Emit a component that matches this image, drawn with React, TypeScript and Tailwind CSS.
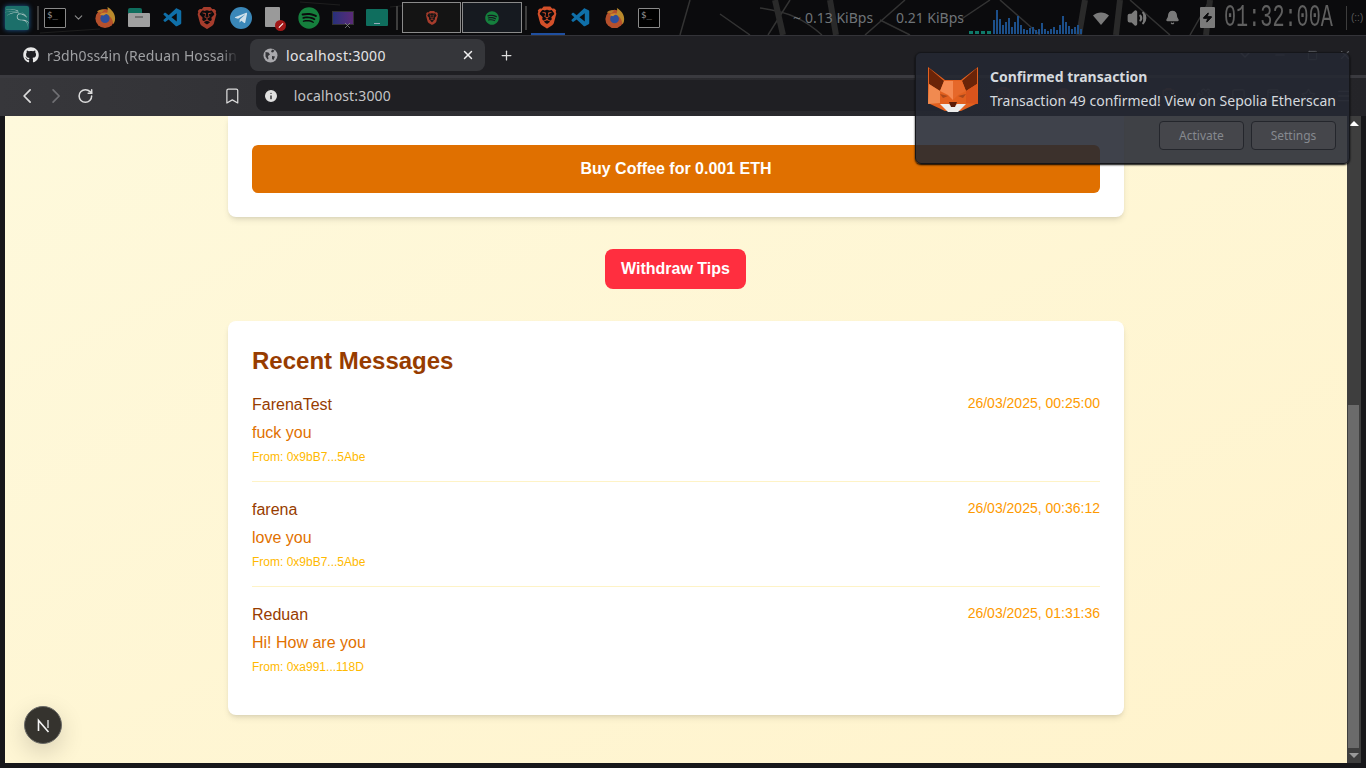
import { ChevronDown, ChevronLeft, ChevronRight, RotateCw, Bookmark, Plus, X, Info, Minus, Square, Volume2, Bell, Zap, Share2, Menu, Puzzle, Star, Wallet } from 'lucide-react';
import { FaGithub, FaSpotify, FaTelegramPlane } from 'react-icons/fa';
import { SiBrave, SiKalilinux } from 'react-icons/si';
import { VscVscode } from 'react-icons/vsc';

const messages = [
  { name: 'FarenaTest', date: '26/03/2025, 00:25:00', text: 'fuck you', from: '0x9bB7...5Abe' },
  { name: 'farena', date: '26/03/2025, 00:36:12', text: 'love you', from: '0x9bB7...5Abe' },
  { name: 'Reduan', date: '26/03/2025, 01:31:36', text: 'Hi! How are you', from: '0xa991...118D' },
];

const barHeights = [14, 24, 15, 9, 12, 16, 7, 12, 18, 9, 5, 4, 6, 7, 4, 5, 11, 5, 3, 5, 7, 4, 9, 18, 12, 8, 5, 7, 9, 5];

const Firefox = ({ size = 22 }: { size?: number }) => (
  <svg width={size} height={size} viewBox="0 0 24 24">
    <circle cx="11.5" cy="13" r="10" fill="#b5502c" />
    <path d="M14 1c5 3 8 7 8 12 0 3-1 5-2 6 0-5-3-9-7-10 1-2 2-5 1-8z" fill="#b98a2c" />
    <path d="M3 6c2-2 5-3 8-2l-3 3z" fill="#b97a2c" />
    <circle cx="11.5" cy="13" r="4.8" fill="#2e4f9c" />
    <path d="M6 9c2-2 6-3 9-1-2 0-4 1-5 2z" fill="#c98a30" />
  </svg>
);

const Terminal = ({ w = 22, h = 20 }: { w?: number; h?: number }) => (
  <div className="flex shrink-0 items-start rounded-[1px] border border-[#8a8a8a] bg-black pl-[2px] text-[9px] leading-[12px] text-[#9a9a9a] [font-family:'DejaVu_Sans_Mono',monospace]" style={{ width: w, height: h }}>
    $_
  </div>
);

const TopPanel = () => (
  <div className="relative flex h-[35px] shrink-0 items-center overflow-hidden bg-[#0b0b0d]">
    {/* wallpaper branches */}
    <svg className="absolute inset-0" width="1366" height="35" fill="none" stroke="#333">
      <path d="M760 8c30 4 45 12 62 27M790 0l-22 35M905 0l-40 35M880 20l30 15M720 14l30 21M1000 0l40 35M960 20l30-20M1130 0l40 35M1190 35l20-35M690 0l-10 35" strokeWidth="1.5" />
      <path d="M775 0l8 35M830 0l6 35M1085 0l-6 35M1120 0l-4 35M1210 0l-4 35" strokeWidth="6" stroke="#2a2a2a" />
      <path d="M40 33l60-4M300 2l40 3M420 4l-30 3" stroke="#1e1e1e" />
    </svg>

    <div className="relative flex items-center pl-[5px]">
      <div className="flex h-[24px] w-[24px] items-center justify-center rounded-[2px] bg-[#1c6f6a] shadow-[0_0_5px_#1d5f9a]">
        <SiKalilinux size={24} color="#b9cecc" />
      </div>
      <div className="ml-[8px] h-[24px] w-[2px] bg-[#3d3d3d]" />
      <div className="ml-[5px]"><Terminal /></div>
      <ChevronDown size={13} color="#8c8c8c" className="ml-[6px]" />
      <div className="ml-[9px]"><Firefox size={23} /></div>
      <div className="ml-[11px] flex w-[23px] flex-col">
        <div className="h-[5px] w-[14px] rounded-t-[2px] bg-[#0f6e5e]" />
        <div className="flex h-[14px] w-[22px] justify-center rounded-[1px] bg-[#a0a0a0]">
          <div className="mt-[3px] h-[2px] w-[8px] bg-[#707070]" />
        </div>
      </div>
      <div className="ml-[11px] flex w-[22px] justify-center"><VscVscode size={22} color="#0f6fa8" /></div>
      <div className="ml-[12px] flex w-[22px] justify-center"><SiBrave size={22} color="#a63c2c" /></div>
      <div className="ml-[12px] flex h-[22px] w-[22px] items-center justify-center rounded-full bg-[#3a87b8]">
        <FaTelegramPlane size={14} color="#cfe0ea" />
      </div>
      <div className="relative ml-[12px] h-[22px] w-[22px]">
        <div className="ml-[1px] h-[20px] w-[15px] rounded-[1px] bg-[#9a9a9a]" />
        <div className="absolute bottom-[-2px] right-0 flex h-[11px] w-[11px] items-center justify-center rounded-full bg-[#a01818]">
          <div className="h-[1px] w-[6px] -rotate-45 bg-white" />
        </div>
      </div>
      <div className="ml-[12px] flex w-[22px] justify-center"><FaSpotify size={22} color="#15803d" /></div>
      <div className="relative ml-[12px] h-[14px] w-[22px] border border-[#333] bg-gradient-to-r from-[#27307a] to-[#5a2a78]">
        <X size={9} color="#8a8a8a" strokeWidth={2} className="absolute -bottom-[6px] right-[1px]" />
      </div>
      <div className="ml-[12px] flex h-[17px] w-[22px] items-end justify-center rounded-[1px] bg-[#0f6e5e] pb-[2px]">
        <div className="h-[1px] w-[6px] bg-[#9ab]" />
      </div>
      <div className="ml-[8px] h-[24px] w-[2px] bg-[#3d3d3d]" />
      <div className="ml-[4px] flex h-[31px] w-[59px] items-center justify-center border border-[#8a8a8a] bg-[#141414]">
        <SiBrave size={14} color="#a63c2c" />
      </div>
      <div className="ml-[1px] flex h-[31px] w-[60px] items-center justify-center border border-[#8a8a8a] bg-[#161a20]">
        <FaSpotify size={14} color="#15803d" />
      </div>
      <div className="ml-[3px] h-[24px] w-[2px] bg-[#3d3d3d]" />
      <div className="relative ml-[9px] flex h-[35px] w-[22px] items-center justify-center">
        <SiBrave size={23} color="#d4502a" />
        <div className="absolute bottom-0 left-[-5px] h-[2px] w-[34px] bg-[#1f4fa0]" />
      </div>
      <div className="ml-[12px] flex w-[22px] justify-center"><VscVscode size={22} color="#0f6fa8" /></div>
      <div className="ml-[12px]"><Firefox size={22} /></div>
      <div className="ml-[12px]"><Terminal /></div>
    </div>

    <div className="relative ml-[133px] flex w-[171px] shrink-0 items-center whitespace-nowrap text-[14px] text-[#6f7478] [font-family:'Noto_Sans',sans-serif]">
      <span className="w-[12px]">~</span>
      <span className="w-[91px]">0.13 KiBps</span>
      <span>0.21 KiBps</span>
    </div>

    <div className="relative ml-[5px] flex h-[35px] shrink-0 items-end pb-[1px]">
      {[0, 1, 2, 3].map((i) => (
        <div key={i} className="mr-[2px] h-[3px] w-[4px] bg-[#0f7a6a]" />
      ))}
      {barHeights.map((h, i) => (
        <div key={i} className="mr-[1px] w-[2px] bg-[#1c4f8a]" style={{ height: h }} />
      ))}
    </div>

    <div className="relative flex flex-1 items-center text-[#7a7a7a]">
      <svg width="16" height="14" viewBox="0 0 16 14" className="ml-[10px]">
        <path d="M0 4.5C4.5.5 11.5.5 16 4.5L8 14z" fill="#7a7a7a" />
      </svg>
      <Volume2 size={20} strokeWidth={2.5} fill="#7a7a7a" className="ml-[18px]" />
      <Bell size={15} fill="#7a7a7a" className="ml-[18px]" />
      <div className="ml-[20px] flex h-[21px] w-[15px] items-center justify-center rounded-[1px] bg-[#7a7a7a]">
        <Zap size={11} fill="#0b0b0d" color="#0b0b0d" />
      </div>
      <span className="ml-[9px] w-[108px] origin-left scale-x-[0.63] whitespace-nowrap text-[32px] leading-[35px] text-[#5f5f5f] [font-family:'Liberation_Mono',monospace]">01:32:00A</span>
      <div className="ml-[14px] h-[24px] w-[1px] bg-[#3d3d3d]" />
      <span className="ml-[4px] whitespace-nowrap text-[10px] text-[#5a5a5a] [font-family:'Liberation_Sans',sans-serif]">(::)</span>
    </div>
  </div>
);

const TabStrip = () => (
  <div className="flex h-[39px] shrink-0 items-center bg-[#1f1f23] pb-[4px] pl-[23px] pt-[3px] text-[14px] [font-family:'Noto_Sans',sans-serif]">
    <FaGithub size={16} color="#e8e8e8" />
    <span className="ml-[8px] w-[192px] overflow-hidden whitespace-nowrap tracking-[0.12px] text-[#9fa0a3] [mask-image:linear-gradient(to_right,black_90%,transparent)]">r3dh0ss4in (Reduan Hossain</span>
    <div className="ml-[11px] flex h-[32px] w-[235px] items-center rounded-lg bg-[#35363a] pl-[13px] pr-[10px] tracking-[0.35px] text-[#e4e4e6]">
      <svg width="15" height="15" viewBox="0 0 15 15">
        <circle cx="7.5" cy="7.5" r="7" fill="#a9a9ad" />
        <path d="M2.5 4l3 .5 1.5 2-2 1.5.5 3-1 .5-2-3zM9 1.5l2.5 1-1.500 2-2-.5zM9 8l3 .500-1.500 3.500-1.500-1z" fill="#35363a" />
      </svg>
      <span className="ml-[8px] flex-1">localhost:3000</span>
      <X size={14} color="#f0f0f0" strokeWidth={2.5} />
    </div>
    <Plus size={15} color="#dcdcdc" className="ml-[14px]" />
    <div className="ml-auto flex items-center gap-[20px] pr-[14px] text-[#5c5e63]">
      <ChevronDown size={16} />
      <Minus size={14} />
      <Square size={11} />
      <X size={14} />
    </div>
  </div>
);

const Toolbar = () => (
  <div className="flex h-[41px] shrink-0 items-center border-t-[3px] border-[#3a3a3f] bg-gradient-to-r from-[#37373b] via-[#2a2a2e] to-[#242428] pb-[3px] pl-[15px] text-[#dcdcdc] [font-family:'Noto_Sans',sans-serif]">
    <ChevronLeft size={26} strokeWidth={1.7} />
    <ChevronRight size={26} strokeWidth={1.7} color="#707074" className="ml-[5px]" />
    <RotateCw size={18} className="ml-[9px]" strokeWidth={2.2} />
    <Bookmark size={20} strokeWidth={1.6} className="ml-[129px]" />
    <div className="ml-[14px] flex h-[31px] w-[750px] items-center rounded-lg bg-[#1f1f23] pl-[7px] text-[14px] tracking-[0.15px] text-[#c4c4c6]">
      <Info size={16} fill="#e0e0e0" color="#1f1f23" />
      <span className="ml-[15px]">localhost:3000</span>
    </div>
    <div className="ml-[5px] flex flex-1 items-center gap-[20px] pr-[14px] text-[#55575c]">
      <Share2 size={15} />
      <SiBrave size={17} color="#6e3b30" />
      <div className="ml-[24px] h-[15px] w-[15px] rounded-full bg-[#6e3b30]" />
      <div className="ml-[70px]"><SiBrave size={15} color="#5a3a34" /></div>
      <Puzzle size={15} />
      <Square size={15} />
      <Wallet size={15} />
      <Star size={15} />
      <Menu size={16} />
    </div>
  </div>
);

const Fox = () => (
  <svg width="50" height="46" viewBox="0 0 50 46">
    <polygon points="0,0 17,13 33,13 50,0 50,36 33,44 17,44 0,36" fill="#e2601f" />
    <polygon points="1,1 16,14 12,24 1,17" fill="#6a2408" />
    <polygon points="49,1 34,14 38,24 49,17" fill="#6a2408" />
    <polygon points="16,14 25,14 25,33 20,28 12,24" fill="#f58a52" />
    <polygon points="25,14 34,14 38,24 30,28 25,33" fill="#e6682a" />
    <polygon points="1,17 12,24 12,36 0,37" fill="#f08a50" />
    <polygon points="49,17 38,24 38,36 50,37" fill="#d9541c" />
    <polygon points="12,27 20,29 15,31" fill="#a8481c" />
    <polygon points="38,27 30,29 35,31" fill="#a8481c" />
    <polygon points="12,37 21,37 25,40 29,37 38,37 30,45 20,45" fill="#ececec" />
    <polygon points="21,35 29,35 27,40 23,40" fill="#5a1c08" />
  </svg>
);

const Notification = () => (
  <div className="absolute left-[915px] top-[52px] h-[112px] w-[435px] rounded-md border border-[#15161a] bg-[#242832]/[0.88] text-[#d5d9de] shadow-[0_1px_2px_#000] [font-family:'Noto_Sans',sans-serif]">
    <div className="flex pl-[12px] pt-[14px]">
      <Fox />
      <div className="ml-[12px]">
        <div className="text-[14px] font-bold leading-[20px]">Confirmed transaction</div>
        <div className="mt-[4px] whitespace-nowrap text-[14px] leading-[20px]">Transaction 49 confirmed! View on Sepolia Etherscan</div>
      </div>
    </div>
    <div className="mt-[8px] flex justify-end gap-[7px] pr-[13px]">
      <button className="h-[29px] w-[85px] rounded border border-[#24262c] bg-[#ffffff08] text-[12px] text-[#85898f]">Activate</button>
      <button className="h-[29px] w-[85px] rounded border border-[#24262c] bg-[#ffffff08] text-[12px] text-[#85898f]">Settings</button>
    </div>
  </div>
);

const Page = () => (
  <div className="relative flex-1 overflow-hidden bg-gradient-to-br from-[#fef9dc] to-[#fff3cc] [font-family:'Liberation_Sans',Arial,sans-serif]">
    <div className="mx-auto flex w-[896px] flex-col items-center">
      <div className="w-full rounded-b-lg bg-white px-6 pb-6 pt-[29px] shadow-md">
        <button className="h-[48px] w-full rounded-md bg-[#e07000] text-[16px] font-bold text-white">Buy Coffee for 0.001 ETH</button>
      </div>
      <button className="mr-[1px] mt-8 h-[40px] w-[141px] rounded-lg bg-[#ff2e3f] text-[16px] font-bold text-white">Withdraw Tips</button>
      <div className="mt-8 w-full rounded-lg bg-white p-6 shadow-md">
        <h2 className="mb-4 text-[24px] font-bold leading-[32px] text-[#973c00]">Recent Messages</h2>
        {messages.map((m, i) => (
          <div key={m.name} className={`pb-4 ${i < messages.length - 1 ? 'mb-4 border-b border-[#fef3c6]' : ''}`}>
            <div className="flex items-start justify-between">
              <span className="text-[16px] leading-[24px] text-[#973c00]">{m.name}</span>
              <span className="text-[14px] leading-[20px] text-[#fe9a00]">{m.date}</span>
            </div>
            <p className="mt-[4px] text-[16px] leading-[24px] text-[#e17100]">{m.text}</p>
            <p className="mt-[4px] text-[12px] leading-[16px] text-[#ffb900]">From: {m.from}</p>
          </div>
        ))}
      </div>
    </div>
    <div className="absolute bottom-[19px] left-[19px] flex h-[38px] w-[38px] items-center justify-center rounded-full border border-[#6a6a66] bg-[#35332e] shadow-[0_8px_24px_rgba(0,0,0,0.16)]">
      <svg width="15" height="15" viewBox="0 0 15 15" fill="none">
        <path d="M2.500 13V2.500L12.500 14" stroke="#f5f5f5" strokeWidth="1.6" />
        <path d="M12 2v8" stroke="#c8c8c8" strokeWidth="1.6" />
      </svg>
    </div>
  </div>
);

const Scrollbar = () => (
  <div className="flex w-[14px] shrink-0 flex-col bg-[#3e3e3e] pl-[1px] pr-[2px]">
    <div className="flex h-[289px] shrink-0 justify-center pt-[5px]">
      <div className="h-0 w-0 border-x-[5px] border-b-[5px] border-x-transparent border-b-white" />
    </div>
    <div className="h-[343px] shrink-0 bg-[#6b6b6b]" />
    <div className="flex flex-1 justify-center pt-[5px]">
      <div className="h-0 w-0 border-x-[5px] border-t-[5px] border-x-transparent border-t-[#9a9a9a]" />
    </div>
  </div>
);

export default function App() {
  return (
    <div className="relative flex h-screen w-full flex-col overflow-hidden bg-[#17171a]">
      <TopPanel />
      <div className="flex flex-1 flex-col overflow-hidden border-t border-[#333338]">
        <TabStrip />
        <Toolbar />
        <div className="flex flex-1 overflow-hidden pb-[5px] pl-[5px] pr-[5px]">
          <Page />
          <Scrollbar />
        </div>
      </div>
      <Notification />
    </div>
  );
}
